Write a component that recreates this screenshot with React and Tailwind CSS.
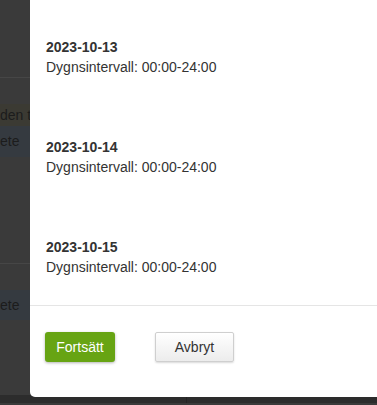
export default function App() {
  const days = ["2023-10-13", "2023-10-14", "2023-10-15"];
  return (
    <div
      className="relative w-[377px] h-[405px] overflow-hidden bg-[#3a3a3a]"
      style={{ fontFamily: '"Liberation Sans", Arial, sans-serif' }}
    >
      {/* dimmed page behind the dialog */}
      <div className="flex flex-col text-[14px] text-[#1c1c1c]">
        <div className="h-[78px] border-b border-[#464646]" />
        <div className="h-[26px]" />
        <div className="h-[22px] bg-[#3b3a33] flex items-center whitespace-nowrap">den tid</div>
        <div className="h-[31px] bg-[#353a40] flex items-center whitespace-nowrap">ete</div>
        <div className="h-[107px] border-b border-[#464646]" />
        <div className="h-[26px]" />
        <div className="h-[30px] bg-[#353a40] flex items-center whitespace-nowrap">ete</div>
        <div className="h-[75px]" />
        <div className="h-[8px] bg-[#2c2c2c] flex">
          <div className="w-[187px] border-r border-[#242424]" />
        </div>
      </div>

      {/* dialog */}
      <div className="absolute left-[30px] top-0 w-[370px] h-[397px] bg-white rounded-bl-[5px] flex flex-col">
        <div className="pt-[37px] pl-[16px] flex flex-col gap-[60px] text-[14px] leading-[20px] text-[#333]">
          {days.map((d) => (
            <div key={d} className="flex flex-col">
              <span className="font-bold">{d}</span>
              <span>Dygnsintervall: 00:00-24:00</span>
            </div>
          ))}
        </div>
        <div className="mt-[28px] h-px bg-[#e5e5e5]" />
        <div className="mt-[26px] pl-[15px] flex gap-[40px]">
          <button className="w-[70px] h-[30px] rounded-[3px] bg-[#67a413] text-white text-[14px] shadow-[0_1px_3px_rgba(0,0,0,0.3)]">
            Fortsätt
          </button>
          <button className="w-[79px] h-[30px] rounded-[2px] border border-[#cfcfcf] bg-gradient-to-b from-white to-[#ececec] text-[#333] text-[14px] shadow-[0_1px_2px_rgba(0,0,0,0.15)]">
            Avbryt
          </button>
        </div>
      </div>
    </div>
  );
}
